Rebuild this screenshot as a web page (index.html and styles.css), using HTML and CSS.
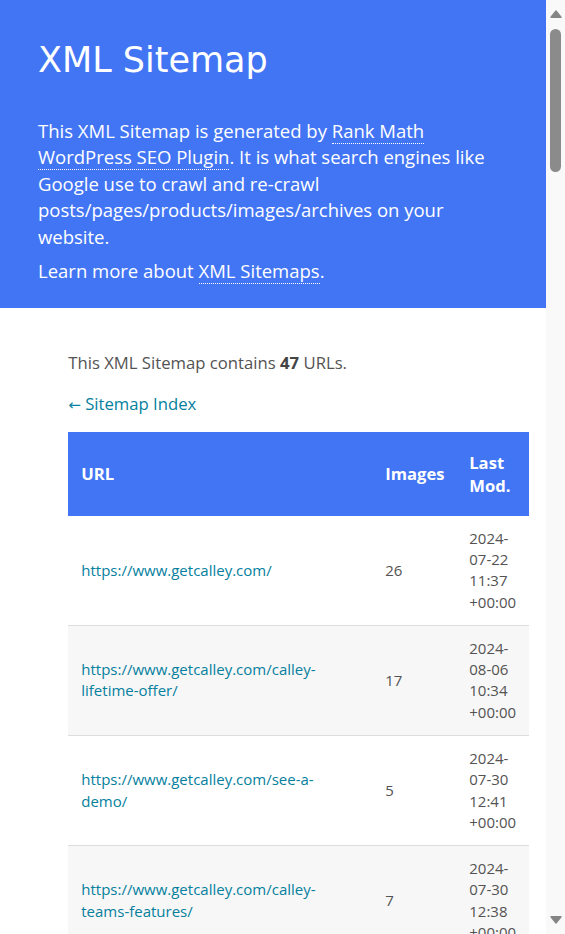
FILE: index.html
```html
<!DOCTYPE html>
<html lang="en">
<head>
<meta charset="utf-8">
<title>XML Sitemap</title>
<link rel="stylesheet" href="styles.css">
</head>
<body>
<div class="window">
  <div class="sitemap">
    <header class="description">
      <h1 class="title">XML Sitemap</h1>
      <p class="lead">This XML Sitemap is generated by <a class="lead-link" href="#">Rank Math WordPress SEO Plugin</a>. It is what search engines like Google use to crawl and re-crawl posts/pages/products/images/archives on your website.</p>
      <p class="lead lead-more">Learn more about <a class="lead-link" href="#">XML Sitemaps</a>.</p>
    </header>
    <main class="content">
      <p class="count">This XML Sitemap contains <strong>47</strong> URLs.</p>
      <p class="back"><a class="link" href="#"><span class="arrow">&larr;</span> Sitemap Index</a></p>
      <table class="urls">
        <colgroup>
          <col class="col-url">
          <col class="col-images">
          <col class="col-mod">
        </colgroup>
        <thead>
          <tr><th>URL</th><th>Images</th><th>Last Mod.</th></tr>
        </thead>
        <tbody>
          <tr>
            <td><a class="link" href="#">https://www.getcalley.com/</a></td>
            <td>26</td>
            <td>2024-07-22 11:37 +00:00</td>
          </tr>
          <tr>
            <td><a class="link" href="#">https://www.getcalley.com/calley-lifetime-offer/</a></td>
            <td>17</td>
            <td>2024-08-06 10:34 +00:00</td>
          </tr>
          <tr>
            <td><a class="link" href="#">https://www.getcalley.com/see-a-demo/</a></td>
            <td>5</td>
            <td>2024-07-30 12:41 +00:00</td>
          </tr>
          <tr>
            <td><a class="link" href="#">https://www.getcalley.com/calley-teams-features/</a></td>
            <td>7</td>
            <td>2024-07-30 12:38 +00:00</td>
          </tr>
        </tbody>
      </table>
    </main>
  </div>
  <div class="scrollbar" aria-hidden="true">
    <svg class="sb-arrow sb-up" width="12" height="8" viewBox="0 0 12 8"><polygon points="1,7.2 11,7.2 6,1" fill="#858585" stroke="#858585" stroke-width="1.4" stroke-linejoin="round"/></svg>
    <div class="sb-thumb"></div>
    <svg class="sb-arrow sb-down" width="12" height="8" viewBox="0 0 12 8"><polygon points="1,0.8 11,0.8 6,7" fill="#858585" stroke="#858585" stroke-width="1.4" stroke-linejoin="round"/></svg>
  </div>
</div>
</body>
</html>
```

FILE: styles.css
```css
html {
  background: #fff;
}

body {
  margin: 0;
  font-family: "Open Sans", "Noto Sans", sans-serif;
  font-size: 16.7px;
  line-height: 24px;
  color: #545353;
}

a {
  text-decoration: none;
}

.window {
  display: grid;
  grid-template-columns: 1fr 19px;
  align-items: start;
  height: 100vh;
  overflow: hidden;
}

/* window scrollbar (the page is much longer than the viewport) */
.scrollbar {
  height: 100vh;
  background: #f9f9f9;
  display: flex;
  flex-direction: column;
  align-items: center;
}

.sb-arrow {
  display: block;
  flex: none;
}

.sb-up {
  margin-top: 10px;
}

.sb-thumb {
  width: 11px;
  height: 143px;
  margin-top: 11px;
  border-radius: 6px;
  background: #8b8b8b;
}

.sb-down {
  margin-top: auto;
  margin-bottom: 10px;
}

.description {
  background: #4275f4;
  color: #fff;
  padding: 40px 38px 24px;
}

.title {
  margin: 0 0 38px;
  font-family: "DejaVu Sans", Verdana, sans-serif;
  font-weight: normal;
  font-size: 35px;
  line-height: 40px;
}

.lead {
  margin: 0;
  font-size: 18.5px;
  line-height: 26.4px;
}

.lead-more {
  margin-top: 8px;
}

.lead-link {
  color: #fff;
  border-bottom: 1px dotted #fff;
}

.content {
  max-width: 75%;
  margin: 0 auto;
  padding-top: 27px;
}

.count {
  margin: 16px 0 17px;
}

.back {
  margin: 0 0 15px;
}

.count strong {
  font-weight: bold;
  color: #444;
}

.link {
  color: #05809e;
}

.arrow {
  font-family: "DejaVu Sans", sans-serif;
  font-size: 15px;
}

.urls {
  width: 461px;
  table-layout: fixed;
  border-collapse: collapse;
  font-size: 15px;
}

.col-url {
  width: 304px;
}
.col-images {
  width: 84px;
}
.col-mod {
  width: 73px;
}

.urls th {
  background: #4275f4;
  color: #fff;
  text-align: left;
  font-weight: bold;
  font-size: 16.6px;
  line-height: 23.4px;
  padding: 18.2px 13px;
}

.urls td {
  padding: 12px 13px;
  line-height: 21.3px;
  border-bottom: 1px solid #ddd;
  vertical-align: middle;
}

.urls tbody tr:nth-child(even) {
  background: #f7f7f7;
}
```
